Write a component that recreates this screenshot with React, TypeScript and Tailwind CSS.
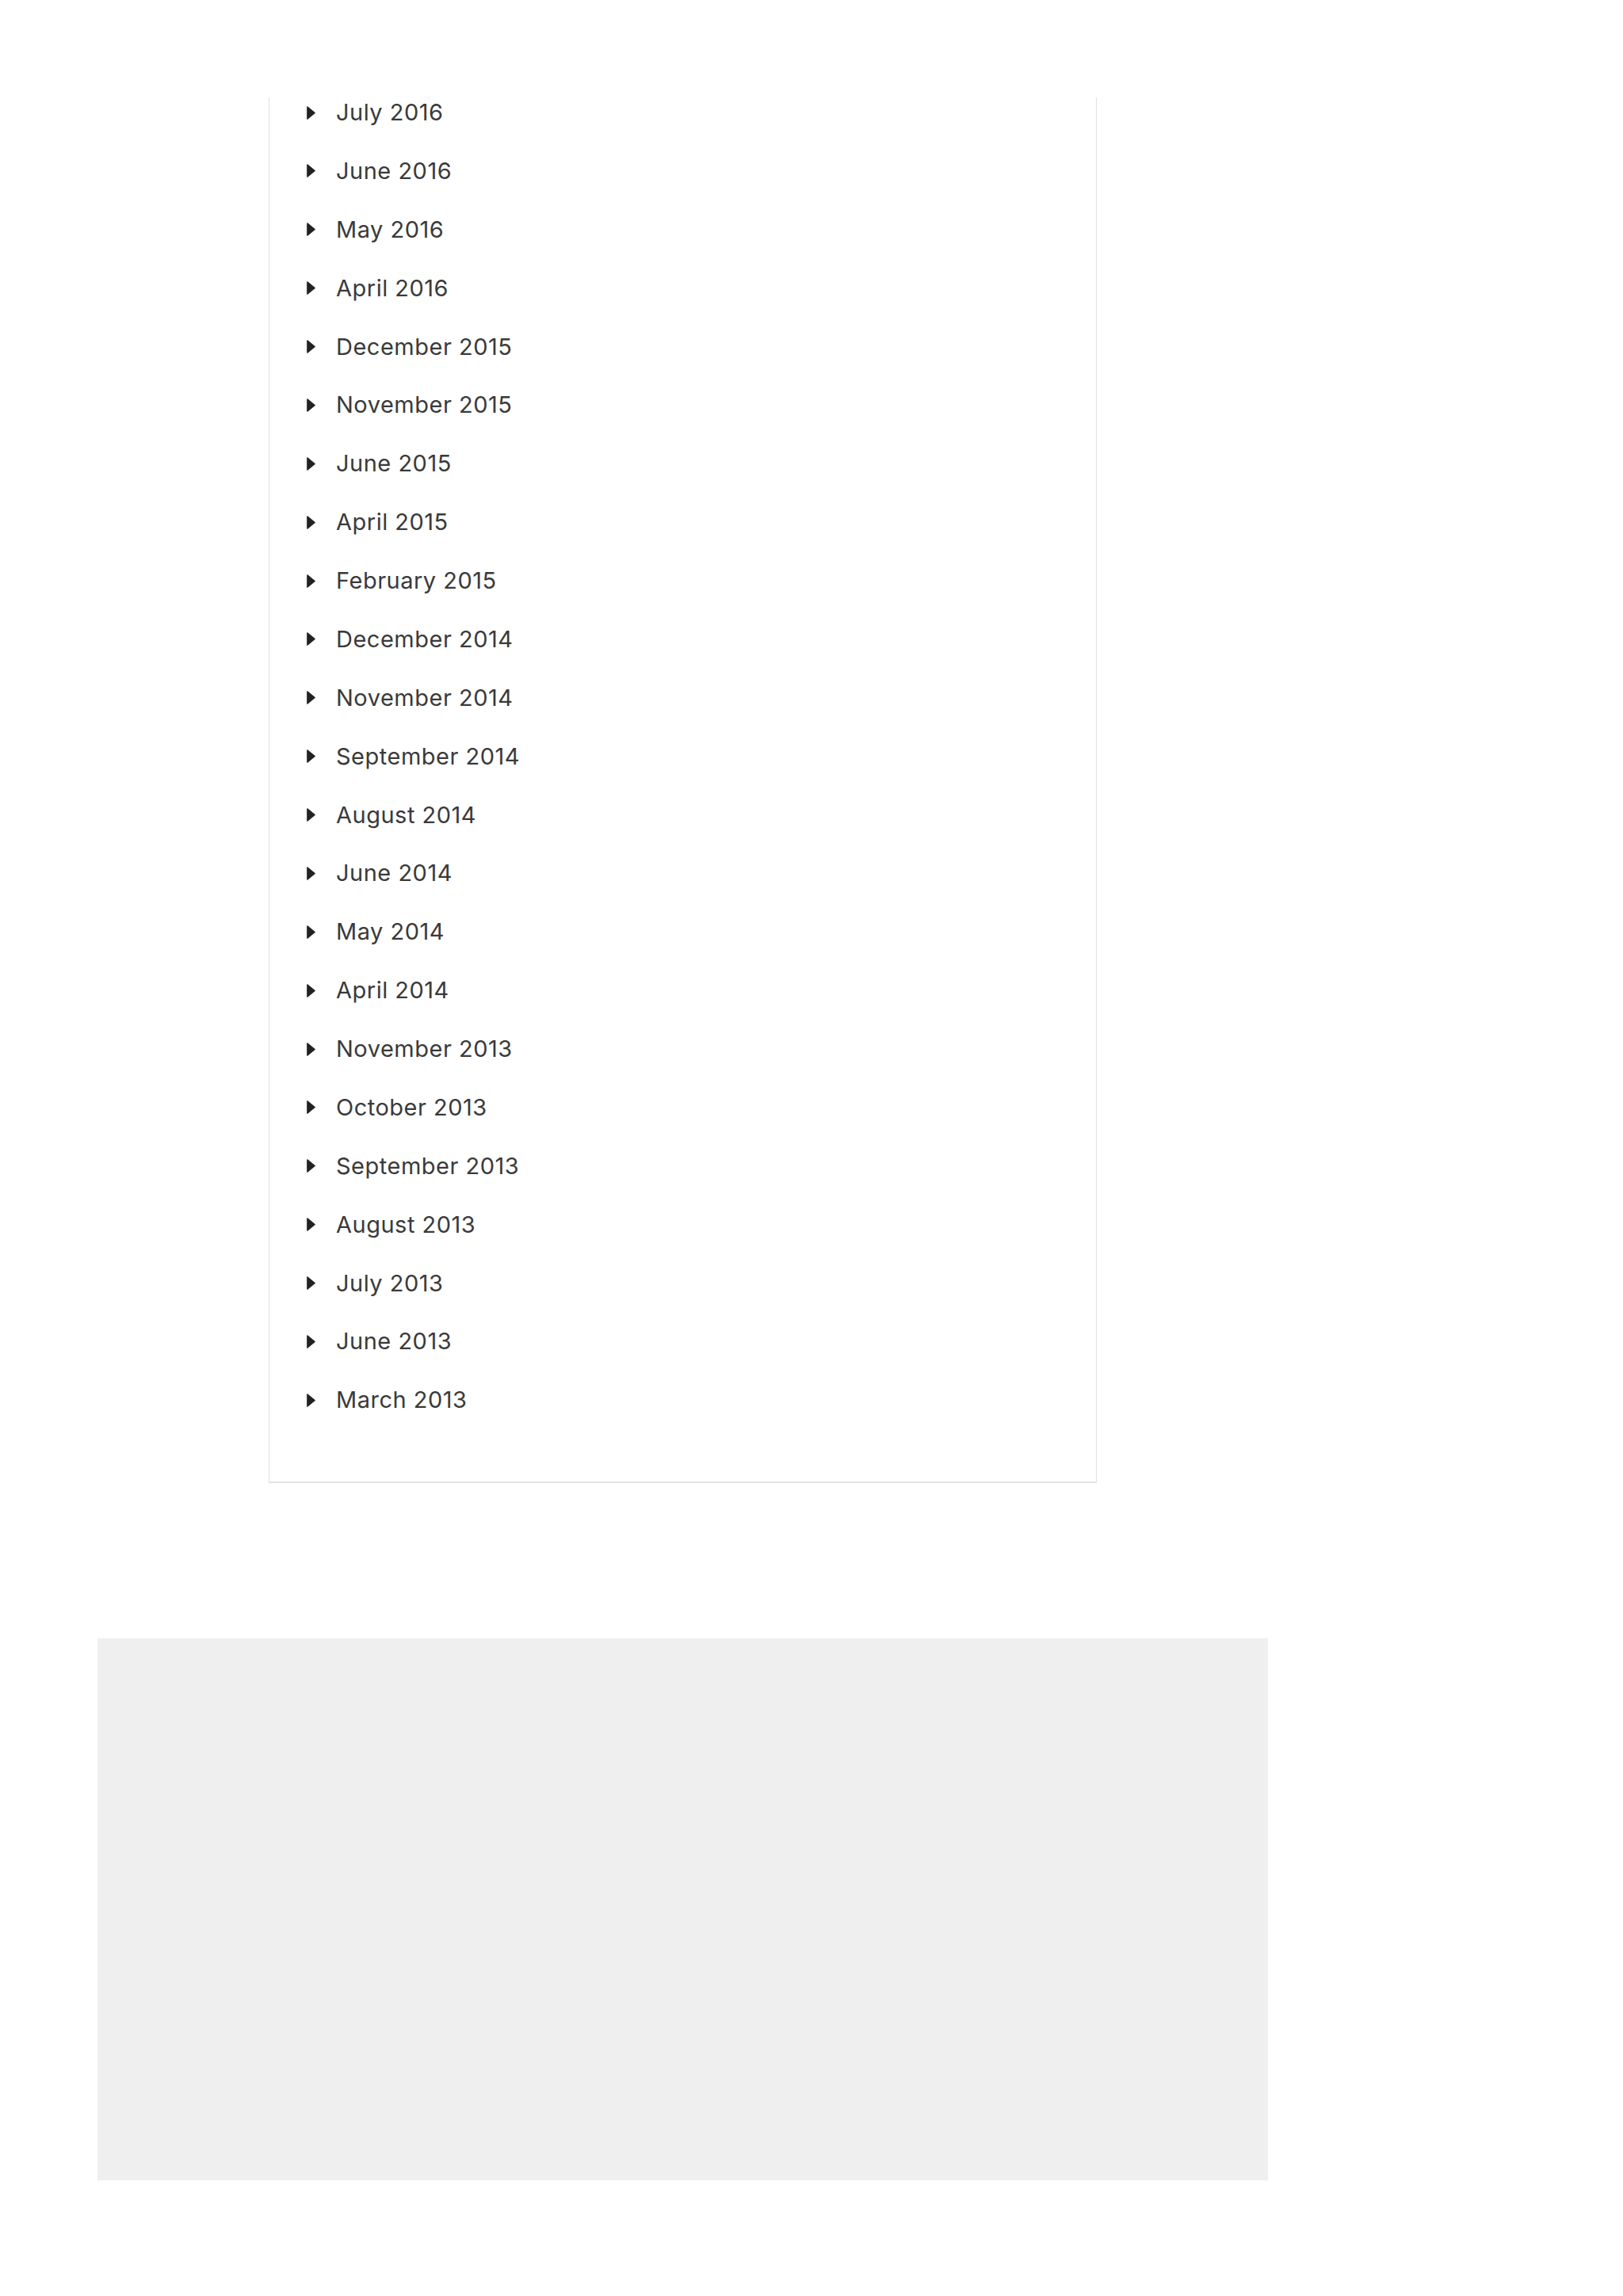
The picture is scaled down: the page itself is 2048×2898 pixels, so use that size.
import React from "react";

const months = [
  "July 2016",
  "June 2016",
  "May 2016",
  "April 2016",
  "December 2015",
  "November 2015",
  "June 2015",
  "April 2015",
  "February 2015",
  "December 2014",
  "November 2014",
  "September 2014",
  "August 2014",
  "June 2014",
  "May 2014",
  "April 2014",
  "November 2013",
  "October 2013",
  "September 2013",
  "August 2013",
  "July 2013",
  "June 2013",
  "March 2013",
];

function Caret() {
  return (
    <svg width="11" height="17" viewBox="0 0 11 17" className="shrink-0">
      <path d="M0.8 0.8 L10.2 8.5 L0.8 16.2 Z" fill="#222222" stroke="#222222" strokeWidth="1.2" strokeLinejoin="round" />
    </svg>
  );
}

export default function App() {
  return (
    <div
      className="w-[2048px] h-[2898px] bg-white"
      style={{ fontFamily: "Inter, 'Open Sans', sans-serif" }}
    >
      <div className="pt-[123px] pl-[339px]">
        <div className="w-[1045px] border-x border-b-2 border-[#e3e3e3] bg-white pt-[1px] pb-[85px]">
          <ul className="flex flex-col gap-[37.875px] pl-[47px]">
            {months.map((m) => (
              <li key={m} className="h-[36px] flex items-center">
                <Caret />
                <a className="ml-[26px] text-[29px] leading-[36px] text-[#3a3a3a] tracking-[0.5px]">
                  {m}
                </a>
              </li>
            ))}
          </ul>
        </div>
      </div>
      <div className="mt-[196px] ml-[123px] w-[1477px] h-[684px] bg-[#efefef]" />
    </div>
  );
}
